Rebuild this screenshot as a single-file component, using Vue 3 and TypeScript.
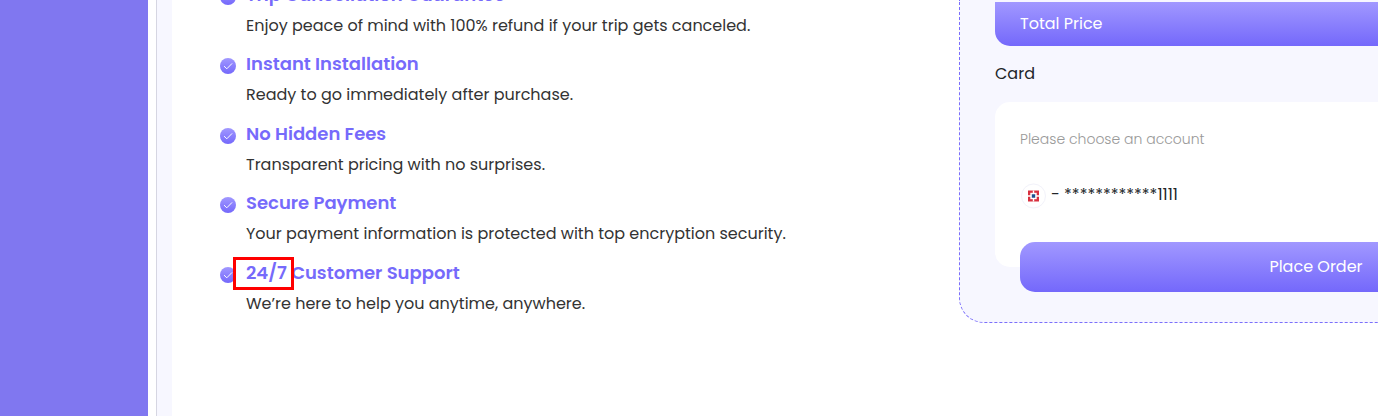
<script setup lang="ts">
interface Benefit {
  title: string
  text: string
  marked?: boolean
}

const benefits: Benefit[] = [
  { title: 'Trip Cancellation Guarantee', text: 'Enjoy peace of mind with 100% refund if your trip gets canceled.' },
  { title: 'Instant Installation', text: 'Ready to go immediately after purchase.' },
  { title: 'No Hidden Fees', text: 'Transparent pricing with no surprises.' },
  { title: 'Secure Payment', text: 'Your payment information is protected with top encryption security.' },
  { title: '24/7 Customer Support', text: 'We’re here to help you anytime, anywhere.', marked: true },
]
</script>

<template>
  <div class="page">
    <aside class="sidebar"></aside>
    <main class="content">
      <ul class="benefits">
        <li v-for="item in benefits" :key="item.title" class="benefit">
          <svg class="check" viewBox="0 0 16 16" aria-hidden="true">
            <defs>
              <linearGradient id="checkFill" x1="0" y1="0" x2="0" y2="1">
                <stop offset="0" stop-color="#a198ff" />
                <stop offset="1" stop-color="#7468fb" />
              </linearGradient>
            </defs>
            <circle cx="8" cy="8" r="8" fill="url(#checkFill)" />
            <path d="M4.3 8.4 6.8 10.8 11.8 5.7" fill="none" stroke="#fff" stroke-width="1" stroke-linecap="round" stroke-linejoin="round" />
          </svg>
          <div class="benefit-body">
            <h3 class="benefit-title">{{ item.title }}</h3>
            <p class="benefit-text">{{ item.text }}</p>
            <span v-if="item.marked" class="marker"></span>
          </div>
        </li>
      </ul>

      <section class="checkout">
        <div class="total">Total Price</div>
        <h3 class="method">Card</h3>
        <div class="card">
          <p class="hint">Please choose an account</p>
          <div class="account">
            <svg class="bank" viewBox="0 0 26 26" aria-hidden="true">
              <circle cx="12.5" cy="13" r="12" fill="#fff" stroke="#f2f2fa" stroke-width="1" />
              <path d="M7 7.5h11v11H7z" fill="#d8303f" />
              <path d="M11.8 7.5h1.4v11h-1.4zM7 12.3h11v1.4H7z" fill="#fff" />
              <path d="M9.3 9.8h6.4v6.4H9.3z" fill="#fff" />
              <path d="M10.8 11.3h3.4v3.4h-3.4z" fill="#1d4f8f" />
            </svg>
            <span class="number">- ************1111</span>
          </div>
          <button type="button" class="order">Place Order</button>
        </div>
      </section>
    </main>
  </div>
</template>

<style>
body {
  margin: 0;
  background: #fff;
}
</style>

<style scoped>
.page {
  display: flex;
  min-height: 100vh;
  overflow: hidden;
  font-family: Poppins, Inter, sans-serif;
  font-size: 16px;
  line-height: 24px;
  color: #333;
}

.sidebar {
  flex: 0 0 148px;
  margin-right: 8px;
  background: #8077f0;
}

.content {
  display: flex;
  flex: 1;
  align-items: flex-start;
  min-width: 0;
  border-left: 1px solid #d6d6e2;
  box-shadow: inset 15px 0 #f7f7ff;
  padding-left: 63px;
}

.benefits {
  display: flex;
  flex: 1;
  flex-direction: column;
  gap: 11px;
  min-width: 0;
  margin: -20px 0 0;
  padding: 0;
  list-style: none;
}

.benefit {
  display: flex;
  gap: 10px;
}

.benefit:nth-child(even) {
  padding-bottom: 1px;
}

.check {
  flex: none;
  width: 16px;
  height: 16px;
  margin-top: 9px;
}

.benefit-body {
  position: relative;
}

.benefit-title {
  margin: 0 0 4px;
  font-size: 18px;
  line-height: 30px;
  font-weight: 600;
  color: #766afb;
}

.benefit-text {
  margin: 0;
}

.marker {
  position: absolute;
  top: -1px;
  left: -13px;
  box-sizing: border-box;
  width: 61px;
  height: 33px;
  border: 3px solid #f00;
}

.checkout {
  box-sizing: border-box;
  flex: 0 0 714px;
  margin-right: -295px;
  padding: 2px 35px 55px;
  border: 1px dashed #7b6ffb;
  border-top: 0;
  border-radius: 0 0 25px 25px;
  background: #f7f7ff;
}

.total {
  padding: 10px 25px;
  border-radius: 0 0 15px 15px;
  background: linear-gradient(#a198ff, #7468fb);
  color: #fff;
}

.method {
  margin: 16px 0;
  font-size: 16px;
  font-weight: 400;
  color: #212529;
}

.card {
  display: flex;
  flex-direction: column;
  padding: 25px 25px 0;
  border-radius: 15px;
  background: #fff;
}

.hint {
  margin: 0;
  font-size: 14px;
  font-weight: 300;
  color: #999;
}

.account {
  display: flex;
  align-items: flex-start;
  gap: 4px;
  margin: 32px 0 33px;
  padding-left: 1px;
  color: #212529;
}

.bank {
  width: 26px;
  height: 26px;
}

.order {
  height: 50px;
  margin: 0 0 -25px;
  border: 0;
  border-radius: 15px;
  background: linear-gradient(#a198ff, #7468fb);
  color: #fff;
  font: inherit;
  cursor: pointer;
}
</style>
